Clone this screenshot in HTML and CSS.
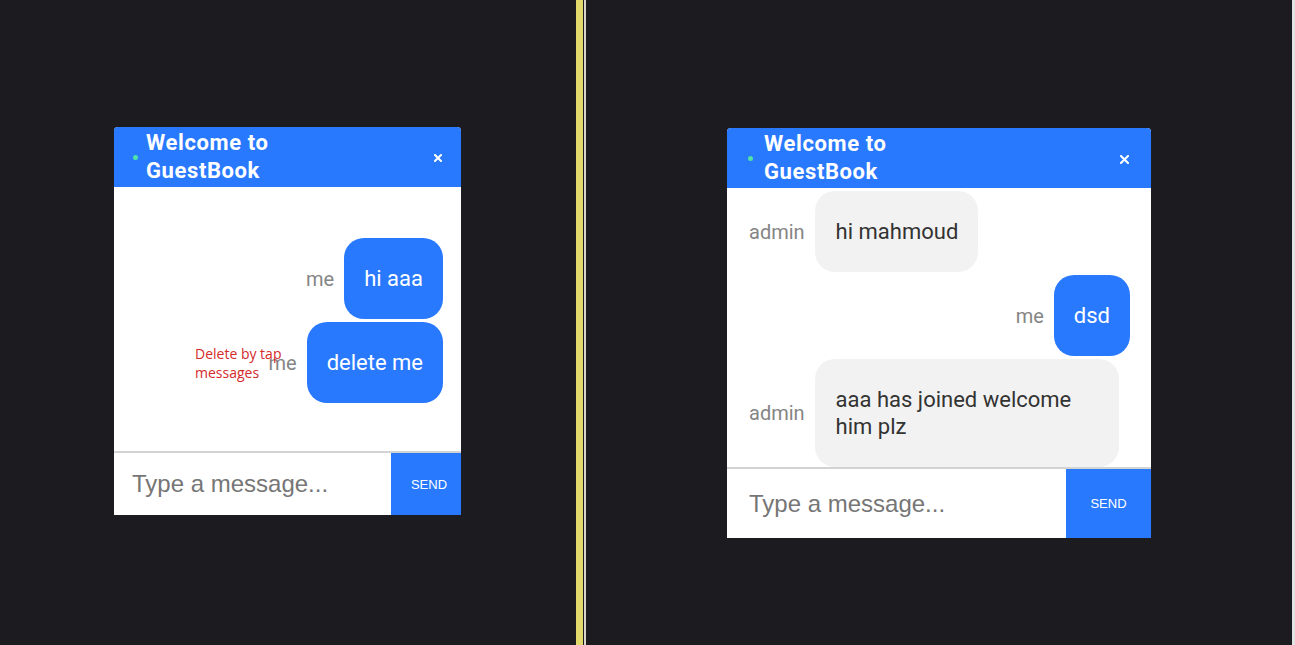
FILE: index.html
```html
<!DOCTYPE html>
<html>
<head>
<meta charset="utf-8">
<link rel="stylesheet" href="styles.css">
</head>
<body>
<div class="pane pane-left">
  <div class="chat chat-small">
    <div class="chat-header">
      <span class="online-dot"></span>
      <span class="chat-title">Welcome to GuestBook</span>
      <span class="close-btn"><svg width="8" height="8" viewBox="0 0 8 8"><path d="M1 1L7 7M7 1L1 7" stroke="#fff" stroke-width="2" stroke-linecap="square"/></svg></span>
    </div>
    <div class="messages messages-centered">
      <div class="msg-row mine"><span class="sender">me</span><div class="bubble bubble-mine">hi aaa</div></div>
      <div class="msg-row mine"><span class="sender">me</span><div class="bubble bubble-mine">delete me</div></div>
      <div class="hint">Delete by tap<br>messages</div>
    </div>
    <form class="composer">
      <input class="composer-input" type="text" placeholder="Type a message...">
      <button class="send-btn" type="button">SEND</button>
    </form>
  </div>
</div>
<div class="divider"><span class="divider-yellow"></span><span class="divider-light"></span></div>
<div class="pane pane-right">
  <div class="chat chat-large">
    <div class="chat-header">
      <span class="online-dot"></span>
      <span class="chat-title">Welcome to GuestBook</span>
      <span class="close-btn"><svg width="9" height="9" viewBox="0 0 9 9"><path d="M1 1L8 8M8 1L1 8" stroke="#fff" stroke-width="2" stroke-linecap="square"/></svg></span>
    </div>
    <div class="messages">
      <div class="msg-row theirs"><span class="sender">admin</span><div class="bubble bubble-theirs">hi mahmoud</div></div>
      <div class="msg-row mine"><span class="sender">me</span><div class="bubble bubble-mine">dsd</div></div>
      <div class="msg-row theirs"><span class="sender">admin</span><div class="bubble bubble-theirs">aaa has joined welcome him plz</div></div>
    </div>
    <form class="composer">
      <input class="composer-input" type="text" placeholder="Type a message...">
      <button class="send-btn" type="button">SEND</button>
    </form>
  </div>
</div>
<div class="edge"></div>
</body>
</html>
```

FILE: styles.css
```css
* { box-sizing: border-box; }
html, body { margin: 0; padding: 0; }
body {
  width: 1295px;
  height: 645px;
  background: #1c1b20;
  display: flex;
  overflow: hidden;
  font-family: Roboto, "Liberation Sans", sans-serif;
}
.pane {
  display: flex;
  align-items: flex-start;
}
.pane-left { width: 576px; padding: 127px 0 0 114px; }
.pane-right { width: 706px; padding: 128px 0 0 141px; }
.divider { display: flex; width: 10px; height: 100%; }
.divider-yellow { width: 7px; background: #e3d86c; margin-right: 1px; }
.divider-light { width: 2px; background: #d9d5c9; }
.edge { width: 3px; height: 100%; background: #e2e2e2; }

.chat {
  display: flex;
  flex-direction: column;
  background: #fff;
  border-radius: 4px 4px 0 0;
}
.chat-small { width: 347px; height: 388px; }
.chat-large { width: 424px; height: 410px; }

.chat-header {
  height: 60px;
  flex: none;
  background: #2979ff;
  border-radius: 4px 4px 0 0;
  display: flex;
  align-items: center;
  padding: 0 19px;
}
.chat-large .chat-header { padding: 0 22px 0 21px; }
.online-dot {
  width: 5px;
  height: 5px;
  border-radius: 50%;
  background: #4fe3a5;
  margin-right: 8px;
  flex: none;
}
.chat-large .online-dot { margin-right: 11px; }
.chat-title {
  color: #fff;
  font-family: Roboto, sans-serif;
  font-weight: 700;
  font-size: 22px;
  letter-spacing: 0.6px;
  line-height: 28px;
  max-width: 150px;
  flex: 1;
}
.close-btn { display: flex; margin-left: auto; margin-top: 2px; }

.messages {
  position: relative;
  flex: 1;
  overflow: hidden;
  display: flex;
  flex-direction: column;
  gap: 3px;
  padding: 3px 21px 0 22px;
  border-bottom: 2px solid #d3d3d3;
}
.messages-centered {
  padding: 51px 18px 0 18px;
}
.msg-row {
  display: flex;
  align-items: center;
  gap: 10px;
  flex: none;
}
.msg-row.mine { justify-content: flex-end; }
.msg-row.theirs { justify-content: flex-start; }
.sender {
  font-size: 20px;
  color: #858585;
}
.bubble {
  font-size: 22px;
  line-height: 27px;
  padding: 27px 20px;
  border-radius: 20px;
  max-width: 304px;
}
.bubble-mine { background: #2979ff; color: #fff; }
.bubble-theirs { background: #f2f2f2; color: #333; padding-left: 21px; }

.hint {
  position: absolute;
  left: 81px;
  top: 157px;
  font-family: "Open Sans", sans-serif;
  font-size: 14px;
  line-height: 19px;
  color: #d42a2a;
}

.composer {
  margin: 0;
  display: flex;
  flex: none;
  height: 62px;
}
.chat-large .composer { height: 69px; }
.composer-input {
  flex: 1;
  min-width: 0;
  border: none;
  outline: none;
  padding: 0 0 0 18px;
  font-family: "Liberation Sans", Arial, sans-serif;
  font-size: 24px;
  color: #333;
  background: #fff;
}
.chat-large .composer-input { padding-left: 22px; }
.composer-input::placeholder { color: #767676; }
.send-btn {
  width: 70px;
  border: none;
  background: #2979ff;
  color: #fff;
  font-family: "Liberation Sans", Arial, sans-serif;
  font-size: 13px;
  padding: 0 0 0 6px;
}
.chat-large .send-btn { width: 85px; padding: 0; }
```
